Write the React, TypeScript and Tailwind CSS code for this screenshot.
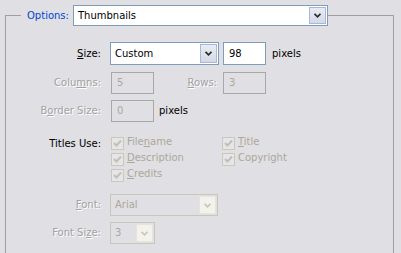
const dim = "text-[#a2a2a2] [text-shadow:1px_1px_0_#ffffff]";

function Chevron({ className }: { className: string }) {
  return (
    <svg width="7" height="5" viewBox="0 0 7 5" className={className}>
      <path d="M0.5 0.8 L3.5 3.8 L6.5 0.8" fill="none" stroke="currentColor" strokeWidth="1.7" />
    </svg>
  );
}

type ComboProps = { value: string; className: string; disabled?: boolean };

function Combo({ value, className, disabled }: ComboProps) {
  if (disabled) {
    return (
      <div className={`flex border border-[#c9c7ba] p-px ${className}`}>
        <div className="flex flex-1 items-center pl-[3px] text-[#aca899]">{value}</div>
        <div className="flex w-[17px] items-center justify-center rounded-[1px] border border-[#e6e4dc] bg-[#f3f2ec]">
          <Chevron className="text-[#c9c7ba]" />
        </div>
      </div>
    );
  }
  return (
    <div className={`flex border border-[#7f9db9] bg-white p-px ${className}`}>
      <div className="flex flex-1 items-center pl-[3px] text-black">{value}</div>
      <div className="flex w-[17px] items-center justify-center border border-[#a9b8d3] bg-gradient-to-b from-[#e9ecf3] to-[#d3d9e6]">
        <Chevron className="text-[#2a2a2a]" />
      </div>
    </div>
  );
}

function Edit({ value, disabled }: { value: string; disabled?: boolean }) {
  return disabled ? (
    <div className="flex h-[22px] w-[43px] items-center border border-[#a8a8a8] pl-[5px] text-[#aca899]">{value}</div>
  ) : (
    <div className="flex h-[23px] w-[43px] items-center border border-[#7f9db9] bg-white pl-[5px] text-black">{value}</div>
  );
}

function Check({ label }: { label: React.ReactNode }) {
  return (
    <div className="flex h-[16px] items-start">
      <div className="flex h-[13px] w-[13px] items-center justify-center border border-[#cac8bb] bg-[#e6e5e8]">
        <svg width="9" height="9" viewBox="0 0 9 9">
          <path d="M1 4 L3.5 6.5 L8 1.5" fill="none" stroke="#c2c0b3" strokeWidth="2" />
        </svg>
      </div>
      <span className="ml-[3px] text-[#aca899]">{label}</span>
    </div>
  );
}

const u = (s: string) => <span className="underline underline-offset-1">{s}</span>;

export default function App() {
  return (
    <div className="h-[253px] w-[401px] overflow-hidden bg-[#e0dfe3] pt-[5px] font-['DejaVu_Sans',sans-serif] text-[10px] leading-none">
      <fieldset className="ml-[5px] w-[389px] border border-[#a0a0a0] pb-[30px]">
        <legend className="ml-[15px] pl-[6px]">
          <div className="flex h-[21px] items-center">
            <span className="text-[#0046d5]">Options:</span>
            <Combo value="Thumbnails" className="ml-[4px] h-[21px] w-[255px]" />
          </div>
        </legend>

        <div className="mt-[16px] flex h-[23px] items-center">
          <div className="w-[95px] text-right text-black">{u("S")}ize:</div>
          <Combo value="Custom" className="ml-[9px] h-[23px] w-[109px]" />
          <div className="ml-[4px]"><Edit value="98" /></div>
          <span className="ml-[6px] text-black">pixels</span>
        </div>

        <div className="mt-[7px] flex h-[22px] items-center">
          <div className={`w-[95px] text-right ${dim}`}>Colu{u("m")}ns:</div>
          <div className="ml-[10px]"><Edit value="5" disabled /></div>
          <div className={`w-[63px] text-right ${dim}`}>{u("R")}ows:</div>
          <div className="ml-[6px]"><Edit value="3" disabled /></div>
        </div>

        <div className="mt-[6px] flex h-[22px] items-center">
          <div className={`w-[95px] text-right ${dim}`}>B{u("o")}rder Size:</div>
          <div className="ml-[10px]"><Edit value="0" disabled /></div>
          <span className="ml-[5px] text-black">pixels</span>
        </div>

        <div className="mt-[15px] flex">
          <div className="w-[95px] pt-[2px] text-right text-black">Titles Use:</div>
          <div className="ml-[10px] grid grid-cols-[111px_1fr]">
            <Check label={<>File{u("n")}ame</>} />
            <Check label={<>{u("T")}itle</>} />
            <Check label={<>{u("D")}escription</>} />
            <Check label="Copyright" />
            <Check label={<>{u("C")}redits</>} />
          </div>
        </div>

        <div className="mt-[9px] flex h-[22px] items-center">
          <div className={`w-[95px] text-right ${dim}`}>{u("F")}ont:</div>
          <Combo value="Arial" className="ml-[9px] h-[22px] w-[108px]" disabled />
        </div>

        <div className="mt-[6px] flex h-[22px] items-center">
          <div className={`w-[95px] text-right ${dim}`}>Font Si{u("z")}e:</div>
          <Combo value="3" className="ml-[9px] h-[22px] w-[45px]" disabled />
        </div>
      </fieldset>
    </div>
  );
}
